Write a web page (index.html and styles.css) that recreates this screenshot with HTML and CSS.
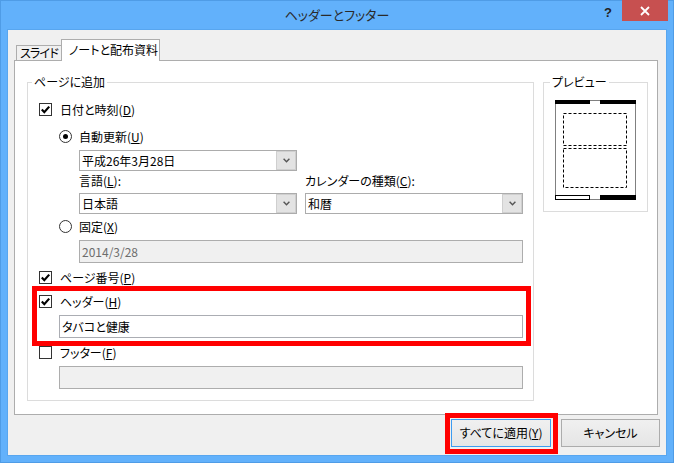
FILE: index.html
```html
<!DOCTYPE html>
<html lang="ja">
<head>
<meta charset="utf-8">
<title>ヘッダーとフッター</title>
<link rel="stylesheet" href="styles.css">
</head>
<body>
<div class="window">
  <div class="titlebar">
    <div></div>
    <div class="title">ヘッダーとフッター</div>
    <div class="caption-buttons">
      <span class="help">?</span>
      <span class="close"><svg width="10" height="10" viewBox="0 0 10 10"><path d="M1 1 L9 9 M9 1 L1 9" stroke="#fff" stroke-width="1.8" fill="none"/></svg></span>
    </div>
  </div>
  <div class="client">
    <div class="tabs">
      <div class="tab">スライド</div>
      <div class="tab active">ノートと配布資料</div>
    </div>
    <div class="panel">
      <div class="group main">
        <span class="group-title">ページに追加</span>
        <div class="row r-date"><span class="cb"><svg width="11" height="11" viewBox="0 0 11 11"><path d="M1.8 5.6 L4.3 8.2 L9.2 2.6" stroke="#000" stroke-width="2.2" fill="none"/></svg></span><span class="lbl">日付と時刻(<u>D</u>)</span></div>
        <div class="row r-auto"><span class="rb on"></span><span class="lbl">自動更新(<u>U</u>)</span></div>
        <div class="auto-block">
          <div class="combo"><span class="combo-text">平成26年3月28日</span><span class="arrow"><svg width="7" height="5" viewBox="0 0 7 5"><path d="M0.6 0.8 L3.5 3.8 L6.4 0.8" stroke="#555" stroke-width="1.4" fill="none"/></svg></span></div>
          <div class="combo-grid">
            <span class="lbl">言語(<u>L</u>):</span>
            <span class="lbl">カレンダーの種類(<u>C</u>):</span>
            <div class="combo"><span class="combo-text">日本語</span><span class="arrow"><svg width="7" height="5" viewBox="0 0 7 5"><path d="M0.6 0.8 L3.5 3.8 L6.4 0.8" stroke="#555" stroke-width="1.4" fill="none"/></svg></span></div>
            <div class="combo"><span class="combo-text">和暦</span><span class="arrow"><svg width="7" height="5" viewBox="0 0 7 5"><path d="M0.6 0.8 L3.5 3.8 L6.4 0.8" stroke="#555" stroke-width="1.4" fill="none"/></svg></span></div>
          </div>
        </div>
        <div class="row r-fixed"><span class="rb"></span><span class="lbl">固定(<u>X</u>)</span></div>
        <div class="textbox disabled tb-fixed">2014/3/28</div>
        <div class="row r-page"><span class="cb"><svg width="11" height="11" viewBox="0 0 11 11"><path d="M1.8 5.6 L4.3 8.2 L9.2 2.6" stroke="#000" stroke-width="2.2" fill="none"/></svg></span><span class="lbl">ページ番号(<u>P</u>)</span></div>
        <div class="hl hl-header">
          <div class="row"><span class="cb"><svg width="11" height="11" viewBox="0 0 11 11"><path d="M1.8 5.6 L4.3 8.2 L9.2 2.6" stroke="#000" stroke-width="2.2" fill="none"/></svg></span><span class="lbl">ヘッダー(<u>H</u>)</span></div>
          <div class="textbox tb-hf tb-header">タバコと健康</div>
        </div>
        <div class="row r-footer"><span class="cb"></span><span class="lbl">フッター(<u>F</u>)</span></div>
        <div class="textbox disabled tb-hf tb-footer"></div>
      </div>
      <div class="group preview">
        <span class="group-title">プレビュー</span>
        <svg class="page" width="81" height="100" viewBox="0 0 81 100">
          <rect x="0.5" y="0.5" width="80" height="99" fill="#fff" stroke="#808080"/>
          <rect x="0" y="0" width="35" height="4" fill="#000"/>
          <rect x="45" y="0" width="36" height="4" fill="#000"/>
          <rect x="8.5" y="13.5" width="63" height="32" fill="none" stroke="#000" stroke-dasharray="3 2"/>
          <rect x="8.5" y="48.5" width="63" height="39" fill="none" stroke="#000" stroke-dasharray="3 2"/>
          <rect x="0.5" y="95.5" width="34" height="4" fill="#fff" stroke="#000"/>
          <rect x="45" y="95" width="36" height="5" fill="#000"/>
        </svg>
      </div>
    </div>
    <div class="buttons">
      <div class="hl hl-btn"><div class="btn default">すべてに適用(<u>Y</u>)</div></div>
      <div class="btn">キャンセル</div>
    </div>
  </div>
</div>
</body>
</html>
```

FILE: styles.css
```css
* { box-sizing: border-box; }
html, body { margin: 0; padding: 0; }
body {
  width: 674px;
  height: 463px;
  overflow: hidden;
  font-family: "Noto Sans CJK JP", "Noto Sans", sans-serif;
  font-size: 12px;
  line-height: 16px;
  color: #000;
  font-feature-settings: "palt";
}
u { text-decoration: underline; text-underline-offset: 1px; }

.window {
  width: 674px;
  height: 463px;
  background: #62b1fb;
  border: 1px solid #4f9ce6;
  display: flex;
  flex-direction: column;
}

.titlebar {
  height: 29px;
  display: grid;
  grid-template-columns: 1fr auto 1fr;
  align-items: start;
}
.title {
  padding-top: 6px;
  font-size: 13px;
  line-height: 16px;
  color: #2a2a2a;
}
.caption-buttons {
  display: flex;
  justify-content: flex-end;
  align-items: flex-start;
  margin-right: 5px;
}
.help {
  font-family: "Liberation Sans", sans-serif;
  font-weight: bold;
  font-size: 13px;
  line-height: 14px;
  color: #222;
  margin-top: 5px;
  margin-right: 10px;
}
.close {
  width: 46px;
  height: 21px;
  margin-top: -1px;
  background: #c75050;
  display: flex;
  align-items: center;
  justify-content: center;
}

.client {
  margin: 0 7px 7px 7px;
  height: 425px;
  background: #f0f0f0;
  box-shadow: 0 0 0 1px #58a6ef;
  display: flex;
  flex-direction: column;
}

.tabs {
  display: flex;
  align-items: flex-end;
  margin-top: 9px;
  padding-left: 8px;
  height: 21px;
  position: relative;
  z-index: 1;
}
.tab {
  height: 15px;
  width: 46px;
  border: 1px solid #adadad;
  border-bottom: none;
  background: #f0f0f0;
  font-size: 12px;
  line-height: 14px;
  padding-left: 3px;
  letter-spacing: -0.8px;
  white-space: nowrap;
}
.tab.active {
  height: 22px;
  width: 99px;
  margin-left: -1px;
  margin-bottom: -1px;
  background: #fff;
  padding-left: 7px;
  padding-top: 3px;
  letter-spacing: 0;
}

.panel {
  margin-left: 6px;
  width: 644px;
  height: 355px;
  border: 1px solid #adadad;
  background: #fff;
  display: flex;
  align-items: flex-start;
  gap: 9px;
  padding: 21px 0 0 12px;
}

.group {
  border: 1px solid #dcdcdc;
  position: relative;
}
.group-title {
  position: absolute;
  top: -9px;
  left: 4px;
  padding: 0 2px;
  background: #fff;
  line-height: 16px;
  white-space: nowrap;
}
.main {
  width: 507px;
  padding: 20px 0 11px 0;
}
.preview {
  width: 105px;
  height: 130px;
  padding: 17px 0 0 11px;
}
.preview .group-title { left: 6px; }
.page { display: block; }

.row {
  display: flex;
  align-items: center;
  height: 13px;
  margin-left: 11px;
  white-space: nowrap;
}
.lbl { line-height: 16px; }
.cb {
  width: 13px;
  height: 13px;
  border: 1px solid #333;
  background: #fff;
  display: flex;
  align-items: center;
  justify-content: center;
  margin-right: 8px;
  flex: none;
}
.rb {
  width: 13px;
  height: 13px;
  border: 1px solid #333;
  border-radius: 50%;
  background: #fff;
  margin-right: 7px;
  display: flex;
  align-items: center;
  justify-content: center;
  flex: none;
}
.rb.on::after {
  content: "";
  width: 5px;
  height: 5px;
  border-radius: 50%;
  background: #000;
}
.r-auto, .r-fixed { margin-left: 31px; }
.r-auto { margin-top: 14px; }
.r-fixed { margin-top: 6px; }

.auto-block {
  margin-left: 51px;
  margin-top: 7px;
}
.combo {
  width: 218px;
  height: 21px;
  border: 1px solid #acacac;
  background: #fff;
  display: flex;
  align-items: stretch;
}
.combo-text {
  flex: 1;
  padding-left: 2px;
  line-height: 19px;
}
.arrow {
  width: 20px;
  background: #e3e3e3;
  border: 1px solid #cfcfcf;
  display: flex;
  align-items: center;
  justify-content: center;
}
.combo-grid {
  display: grid;
  grid-template-columns: 218px 218px;
  column-gap: 8px;
  row-gap: 4px;
  margin-top: 2px;
  white-space: nowrap;
}

.textbox {
  height: 23px;
  border: 1px solid #abadb3;
  background: #fff;
  padding-left: 2px;
  line-height: 21px;
}
.textbox.disabled {
  background: #f0f0f0;
  color: #6d6d6d;
  border-color: #adadad;
}
.tb-fixed {
  margin-left: 51px;
  width: 444px;
  margin-top: 7px;
}
.tb-hf {
  margin-left: 31px;
  width: 464px;
  margin-top: 7px;
}
.r-page { margin-top: 8px; }
.hl-header { margin-top: 11px; }
.r-footer { margin-top: 8px; }

.hl { position: relative; }
.hl::after {
  content: "";
  position: absolute;
  border: 5px solid #ff0000;
  pointer-events: none;
}
.hl-header::after {
  top: -9px;
  left: 4px;
  right: 2px;
  bottom: -8px;
}

.buttons {
  display: flex;
  justify-content: flex-end;
  gap: 10px;
  margin-top: 4px;
  padding-right: 6px;
}
.btn {
  height: 28px;
  width: 99px;
  border: 1px solid #acacac;
  background: linear-gradient(#f0f0f0, #e5e5e5);
  display: flex;
  align-items: center;
  justify-content: center;
  white-space: nowrap;
}
.btn.default {
  width: 100px;
  border-color: #3c9cf0;
}
.hl-btn::after {
  top: -6px;
  left: -6px;
  right: -7px;
  bottom: -7px;
}
```
